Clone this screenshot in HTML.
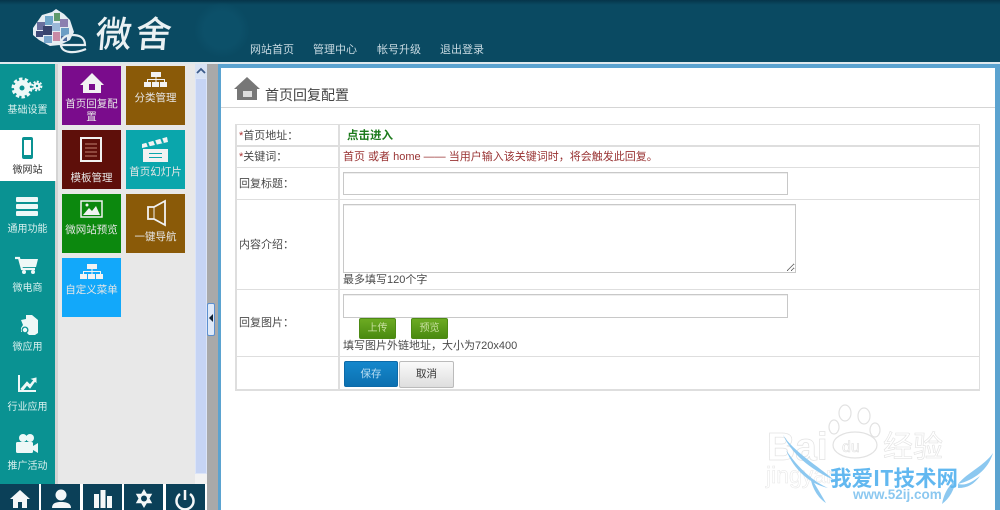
<!DOCTYPE html>
<html><head><meta charset="utf-8"><style>
*{box-sizing:border-box;margin:0;padding:0}
html,body{width:1000px;height:510px;overflow:hidden;background:#fff;font-family:"Liberation Sans","Noto Sans CJK SC",sans-serif}
.a{position:absolute;white-space:nowrap}
#hd{left:0;top:0;width:1000px;height:62px;background:radial-gradient(circle at 222px 30px,#0c5069 0,#0c5069 18px,transparent 28px),linear-gradient(#06354a 0,#0a4a62 5px,#0a4a62 100%)}
.nav{top:43px;font-size:11px;color:#c8dae2;line-height:14px}
.side{left:0;width:55px;text-align:center;color:#d8f0ee;font-size:10px;line-height:12px}
.tile{width:59px;height:59px;color:#e6e6e6;font-size:10.5px;text-align:center;line-height:13px;white-space:normal}
.tile span{position:absolute;left:2px;right:2px}
.lb{font-size:11px;color:#4a4a4a;line-height:13px}
.ln{background:#dedede}
input,textarea{position:absolute;border:1px solid #c8c8c8;background:#fff;display:block;box-shadow:inset 0 1px 0 #eee}
.gb{width:37px;height:21px;background:linear-gradient(#6cab22,#4a8a10);border:1px solid #4d8a14;border-radius:2px;color:#c8e0a0;font-size:10px;line-height:20px;text-align:center}
</style></head><body>
<div class="a" id="hd"></div>
<svg class="a" style="left:30px;top:8px" width="60" height="48" viewBox="0 0 60 48">
<path d="M3 20L12 7 22 4 26 1 34 6 40 12 44 24 40 32 30 37 20 38 9 32 3 27Z" fill="#e6edf3"/>
<rect x="7" y="14" width="8" height="8" fill="#6a6f9e"/><rect x="15" y="8" width="8" height="9" fill="#6fa6c9"/><rect x="24" y="5" width="6" height="8" fill="#5e9a6a"/><rect x="30" y="11" width="8" height="8" fill="#8c80b0"/>
<rect x="6" y="23" width="7" height="6" fill="#3f4a78"/><rect x="13" y="18" width="9" height="9" fill="#39446e"/><rect x="22" y="15" width="8" height="8" fill="#9ab8d8"/><rect x="31" y="20" width="8" height="8" fill="#6b9dc4"/>
<rect x="14" y="28" width="8" height="7" fill="#7ba6cc"/><rect x="23" y="24" width="7" height="9" fill="#c98aa5"/><rect x="31" y="28" width="6" height="5" fill="#4f6a9a"/>
<path d="M32 37H55C55 29 49 27 42 27 33 27 30 33 31 38 33 45 44 46 56 41" fill="none" stroke="#e6eef2" stroke-width="2.2"/>
</svg>
<div class="a" style="left:96px;top:8px;font-size:36px;line-height:48px;color:#eaf1f3;font-family:'Noto Sans CJK SC',sans-serif;font-weight:500;letter-spacing:4px;transform:skewX(-5deg)">微舍</div>
<div class="a nav" style="left:250px">网站首页</div><div class="a nav" style="left:313px">管理中心</div><div class="a nav" style="left:377px">帐号升级</div><div class="a nav" style="left:440px">退出登录</div>
<div class="a" style="left:0;top:62px;width:1000px;height:2px;background:#dfe9ee"></div>

<div class="a" style="left:55px;top:64px;width:140px;height:420px;background:#e8e8e8"></div>
<div class="a" style="left:0;top:64px;width:55px;height:420px;background:#0a9292"></div>
<div class="a" style="left:55px;top:64px;width:3px;height:420px;background:#d4d4d4"></div>
<div class="a" style="left:0;top:130px;width:56px;height:51px;background:#fff"></div>

<svg class="a" style="left:0;top:64px" width="55" height="420" fill="#eef8f7">
<circle cx="22" cy="24" r="8"/><circle cx="22" cy="24" r="9" fill="none" stroke="#eef8f7" stroke-width="3" stroke-dasharray="3.4 2.2"/><circle cx="22" cy="24" r="2.5" fill="#0a9292"/>
<circle cx="37" cy="22" r="3.6"/><circle cx="37" cy="22" r="4.4" fill="none" stroke="#eef8f7" stroke-width="2" stroke-dasharray="2 1.4"/><circle cx="37" cy="22" r="1.2" fill="#0a9292"/>
<rect x="22" y="73" width="11" height="22" rx="2" fill="#0a9292"/><rect x="24" y="76" width="7" height="15" fill="#fff"/>
<rect x="16" y="133" width="22" height="5" rx="1"/><rect x="16" y="140" width="22" height="5" rx="1"/><rect x="16" y="147" width="22" height="5" rx="1"/>
<path d="M15 194h4l3 11h13" fill="none" stroke="#eef8f7" stroke-width="2.2"/><path d="M20 195h18l-2 8H22Z"/><circle cx="24" cy="208" r="2"/><circle cx="33" cy="208" r="2"/>
<path d="M26 251h6l6 5v13l-3 2h-6l-3-3h-5v-4l2-3-2-5 5-1Z"/><circle cx="25" cy="266" r="3.5" fill="#0a9292"/><circle cx="25" cy="266" r="2.2"/>
<path d="M19 311v16h17" fill="none" stroke="#eef8f7" stroke-width="2"/><path d="M21 325l6-7 3 3 4-5-2-1 4-1v4l-1-1-5 7-3-3-4 5Z" stroke="#eef8f7"/>
<circle cx="23" cy="374" r="4"/><circle cx="30" cy="374" r="4"/><rect x="16" y="378" width="17" height="11" rx="1.5"/><path d="M33 382l5-3v10l-5-3Z"/>
</svg>
<div class="a side" style="top:105px">基础设置</div>
<div class="a side" style="top:165px;color:#333">微网站</div>
<div class="a side" style="top:224px">通用功能</div>
<div class="a side" style="top:283px">微电商</div>
<div class="a side" style="top:342px">微应用</div>
<div class="a side" style="top:402px">行业应用</div>
<div class="a side" style="top:461px">推广活动</div>

<div class="a tile" style="left:62px;top:66px;background:#7a0c8c"><span style="top:32px">首页回复配置</span></div>
<div class="a tile" style="left:126px;top:66px;background:#8a5a08"><span style="top:26px">分类管理</span></div>
<div class="a tile" style="left:62px;top:130px;background:#5e0f0a"><span style="top:42px">模板管理</span></div>
<div class="a tile" style="left:126px;top:130px;background:#0aa6ac"><span style="top:36px">首页幻灯片</span></div>
<div class="a tile" style="left:62px;top:194px;background:#0c880e"><span style="top:30px">微网站预览</span></div>
<div class="a tile" style="left:126px;top:194px;background:#8a5a08"><span style="top:37px">一键导航</span></div>
<div class="a tile" style="left:62px;top:258px;background:#12a8fa"><span style="top:26px">自定义菜单</span></div>
<svg class="a" style="left:62px;top:66px" width="130" height="252" fill="#f2f2f2">
<path d="M30 7L18 19h3v8h18v-8h3Z"/><rect x="27" y="18" width="6" height="6" fill="#7a0c8c"/>
<rect x="89" y="6" width="10" height="5"/><rect x="82" y="16" width="7" height="5"/><rect x="90" y="16" width="7" height="5"/><rect x="98" y="16" width="7" height="5"/><path d="M94 11v5M85.500 16v-2.500h17v2.500" stroke="#f2f2f2" fill="none"/>
<rect x="19" y="72" width="20" height="23" fill="none" stroke="#f2f2f2" stroke-width="2"/><path d="M23 78h12M23 82h12M23 86h12M23 90h12" stroke="#c08070"/>
<path d="M80 78l25-7 1 5-26 6Z"/><path d="M85 76l2 5M92 74l2 5M99 72l2 5" stroke="#0aa6ac" stroke-width="2"/><rect x="81" y="83" width="25" height="13"/><path d="M87 87.500h13M87 91.500h13" stroke="#0aa6ac"/>
<rect x="19" y="135" width="21" height="16" fill="none" stroke="#f2f2f2" stroke-width="1.500"/><path d="M21 149l6-7 3 3 4-5 4 9Z"/><circle cx="25" cy="139" r="1.500"/>
<path d="M86 141h6l11-6v24l-11-6h-6Z" fill="none" stroke="#f2f2f2" stroke-width="1.800"/><path d="M92 141v12" stroke="#f2f2f2"/>
<g transform="translate(-64 192)"><rect x="89" y="6" width="10" height="5"/><rect x="82" y="16" width="7" height="5"/><rect x="90" y="16" width="7" height="5"/><rect x="98" y="16" width="7" height="5"/><path d="M94 11v5M85.500 16v-2.500h17v2.500" stroke="#f2f2f2" fill="none"/></g>
</svg>

<div class="a" style="left:195px;top:64px;width:12px;height:420px;background:#f2f2f2"></div>
<div class="a" style="left:195px;top:78px;width:12px;height:396px;background:#c6d4f4;border:1px solid #dbe4f8"></div>
<div class="a" style="left:195px;top:64px;width:12px;height:14px;background:#d7e2f4"></div>
<svg class="a" style="left:196px;top:67px" width="10" height="8"><path d="M1 6l4-4 4 4" fill="none" stroke="#3b5a8a" stroke-width="1.800"/></svg>
<div class="a" style="left:207px;top:64px;width:11px;height:446px;background:#a9a9a9"></div>
<div class="a" style="left:207px;top:303px;width:8px;height:33px;background:#dfe9f8;border:1px solid #5b8fd0;border-radius:2px"></div>
<svg class="a" style="left:208px;top:313px" width="6" height="10"><path d="M5 1v8L1 5Z" fill="#123"/></svg>

<div class="a" style="left:0;top:484px;width:206px;height:26px;background:#fff"></div>
<div class="a" style="left:0;top:484px;width:39px;height:26px;background:#0b4058"></div>
<div class="a" style="left:41px;top:484px;width:39px;height:26px;background:#0b4058"></div>
<div class="a" style="left:83px;top:484px;width:39px;height:26px;background:#0b4058"></div>
<div class="a" style="left:124px;top:484px;width:39px;height:26px;background:#0b4058"></div>
<div class="a" style="left:166px;top:484px;width:39px;height:26px;background:#0b4058"></div>
<svg class="a" style="left:0;top:484px" width="206" height="26" fill="#f4f7f8">
<path d="M20 6L10 15h3v9h5v-6h4v6h5v-9h3Z"/>
<circle cx="61" cy="11" r="5.500"/><path d="M52 24c0-5 4-6 9-6s10 1 10 6Z"/>
<rect x="94" y="10" width="5" height="14"/><rect x="100.500" y="6" width="5" height="18"/><rect x="107" y="12" width="5" height="12"/>
<path d="M144 5l2.800 4.700h5.400l-2.700 4.800 2.700 4.800h-5.400L144 24l-2.800-4.700h-5.400l2.700-4.800-2.700-4.800h5.400Z"/><circle cx="144" cy="14.500" r="3" fill="#0b4058"/>
<path d="M180 10a8.500 8.500 0 1 0 10 0" fill="none" stroke="#f4f7f8" stroke-width="2.500"/><path d="M185 6v10" stroke="#f4f7f8" stroke-width="2.500"/>
</svg>

<div class="a" style="left:218px;top:64px;width:782px;height:446px;background:#fff"></div>
<div class="a" style="left:218px;top:64px;width:782px;height:4px;background:#5ba3d0"></div>
<div class="a" style="left:218px;top:64px;width:3px;height:446px;background:#5ba3d0"></div>
<div class="a" style="left:995px;top:64px;width:5px;height:446px;background:#5ba3d0"></div>
<div class="a" style="left:221px;top:107px;width:774px;height:1px;background:#d5d5d5"></div>
<svg class="a" style="left:233px;top:76px" width="28" height="26"><path d="M14 1L1 13h3v11h20V13h3Z" fill="#777"/><rect x="10" y="15" width="9" height="6" fill="#ddd"/></svg>
<div class="a" style="left:265px;top:86px;font-size:14px;line-height:18px;color:#444">首页回复配置</div>

<div class="a ln" style="left:235px;top:124px;width:745px;height:1px"></div>
<div class="a ln" style="left:235px;top:124px;width:2px;height:267px"></div>
<div class="a ln" style="left:979px;top:124px;width:1px;height:267px"></div>
<div class="a ln" style="left:338px;top:124px;width:2px;height:267px"></div>
<div class="a ln" style="left:235px;top:145px;width:745px;height:2px"></div>
<div class="a ln" style="left:235px;top:167px;width:745px;height:1px"></div>
<div class="a ln" style="left:235px;top:199px;width:745px;height:1px"></div>
<div class="a ln" style="left:235px;top:289px;width:745px;height:1px"></div>
<div class="a ln" style="left:235px;top:356px;width:745px;height:1px"></div>
<div class="a ln" style="left:235px;top:389px;width:745px;height:2px"></div>

<div class="a lb" style="left:239px;top:130px"><span style="color:#a33">*</span>首页地址：</div>
<div class="a lb" style="left:239px;top:151px"><span style="color:#a33">*</span>关键词：</div>
<div class="a lb" style="left:239px;top:178px">回复标题：</div>
<div class="a lb" style="left:239px;top:239px">内容介绍：</div>
<div class="a lb" style="left:239px;top:317px">回复图片：</div>
<div class="a" style="left:347px;top:130px;font-size:11.500px;line-height:13px;font-weight:700;color:#1c7a1c">点击进入</div>
<div class="a" style="left:343px;top:151px;font-size:11px;line-height:13px;color:#933">首页 或者 home —— 当用户输入该关键词时，将会触发此回复。</div>
<input class="a" style="left:343px;top:172px;width:445px;height:23px">
<textarea class="a" style="left:343px;top:204px;width:453px;height:69px"></textarea>
<div class="a lb" style="left:343px;top:274px">最多填写120个字</div>
<input class="a" style="left:343px;top:294px;width:445px;height:24px">
<div class="a gb" style="left:359px;top:318px">上传</div>
<div class="a gb" style="left:411px;top:318px">预览</div>
<div class="a lb" style="left:343px;top:340px">填写图片外链地址，大小为720x400</div>
<div class="a" style="left:344px;top:361px;width:54px;height:26px;background:linear-gradient(#1487cc,#0c70b0);border:1px solid #0c6aa8;border-radius:2px;color:#b8ddf2;font-size:10.500px;line-height:24px;text-align:center">保存</div>
<div class="a" style="left:399px;top:361px;width:55px;height:27px;background:linear-gradient(#fafafa,#dedede);border:1px solid #bbb;border-radius:2px;color:#333;font-size:10.500px;line-height:24px;text-align:center">取消</div>

<svg class="a" style="left:760px;top:400px" width="240" height="110">
<g fill="none" stroke="#e2e2e2" stroke-width="1.200"><ellipse cx="85" cy="13" rx="6" ry="8"/><ellipse cx="104" cy="16" rx="6" ry="8"/><ellipse cx="74" cy="27" rx="5" ry="7"/><ellipse cx="115" cy="30" rx="5" ry="7"/><ellipse cx="95" cy="45" rx="22" ry="13"/></g>
<text x="7" y="60" font-family="Liberation Sans" font-size="39" font-weight="700" fill="#fff" stroke="#e2e2e2" stroke-width=".7">Bai</text>
<text x="82" y="52" font-family="Liberation Sans" font-size="16" fill="#fff" stroke="#dedede" stroke-width=".6">du</text>
<text x="123" y="57" font-family="Noto Sans CJK SC" font-size="30" fill="#fff" stroke="#e2e2e2" stroke-width=".6">经验</text>
<text x="6" y="83" font-family="Liberation Sans" font-size="23" fill="#fff" stroke="#e6e6e6" stroke-width=".5">jingyan</text>
<path d="M23 35C34 52 58 66 74 80 56 72 34 58 23 35ZM26 50C38 68 54 82 68 88 50 84 34 70 26 50ZM50 76C56 86 62 96 66 103 58 98 52 88 50 76Z" fill="#8cc8f0"/>
<path d="M233 53C224 66 208 72 198 84 214 80 228 70 233 53ZM198 84C206 86 212 82 220 76 214 84 208 88 198 88ZM182 104C184 92 190 84 196 80 194 90 190 98 182 104Z" fill="#8cc8f0"/>
<text x="70" y="86" font-family="Noto Sans CJK SC" font-size="21.500" font-weight="700" fill="#62b8f0">我爱IT技术网</text>
<text x="93" y="99" font-family="Liberation Sans" font-size="13.500" font-weight="700" fill="#8cc8f0">www.52ij.com</text>
</svg>
</body></html>
